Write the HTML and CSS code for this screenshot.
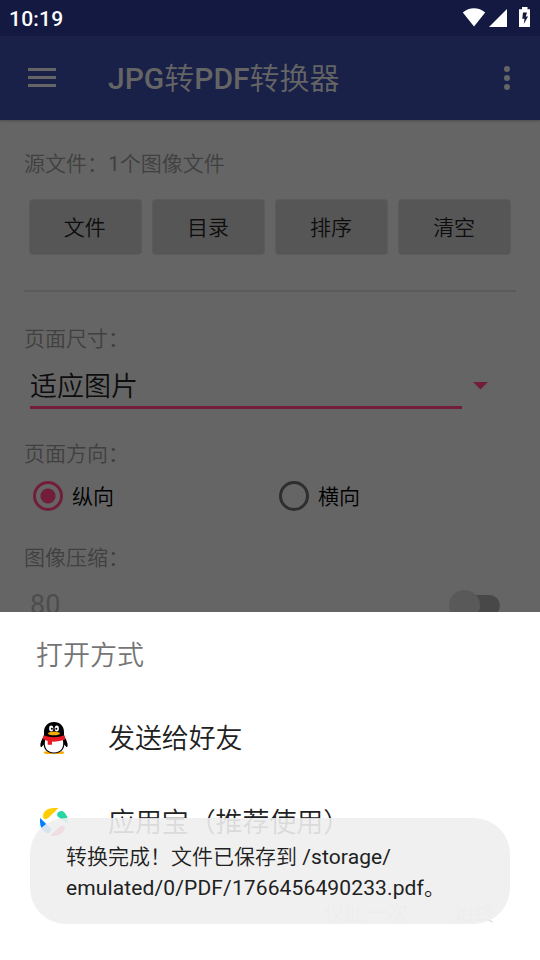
FILE: index.html
```html
<!DOCTYPE html>
<html lang="zh-CN">
<head>
<meta charset="utf-8">
<title>JPG转PDF转换器</title>
<link rel="stylesheet" href="styles.css">
</head>
<body>
<div class="screen">
  <header class="status">
    <span class="clock">10:19</span>
    <svg class="status-icons" width="72" height="24" viewBox="0 0 72 24">
      <path fill="#fff" d="M4.8 6.6C11 .7 21 .7 27.2 6.6L16 20.4Z"/>
      <path fill="#fff" d="M31 21H49V3Z"/>
      <path fill="#fff" d="M61 3.2H64V1H69.5V3.2H72V21H61Z"/>
      <path fill="#141942" d="M65 6.5H69L67.8 10.5H70L65.8 18L66.5 12.8H64.3Z"/>
    </svg>
  </header>
  <nav class="appbar">
    <svg class="menu" width="28" height="19" viewBox="0 0 28 19"><path fill="#656565" d="M0 0H28V3H0ZM0 8H28V11H0ZM0 16H28V19H0Z"/></svg>
    <h1><b>JPG</b>转<b>PDF</b>转换器</h1>
    <svg class="more" width="6" height="24" viewBox="0 0 6 24" fill="#656565"><circle cx="3" cy="3" r="3"/><circle cx="3" cy="12" r="3"/><circle cx="3" cy="21" r="3"/></svg>
  </nav>
  <main class="content">
    <p class="label">源文件：<span class="latin">1</span>个图像文件</p>
    <div class="buttons">
      <button>文件</button><button>目录</button><button>排序</button><button>清空</button>
    </div>
    <hr>
    <p class="label">页面尺寸：</p>
    <div class="select-row">
      <div class="select">适应图片</div>
      <svg width="15" height="8" viewBox="0 0 15 8"><path fill="#721d3a" d="M0 0H15L7.5 7.5Z"/></svg>
    </div>
    <p class="label">页面方向：</p>
    <div class="radios">
      <div class="option"><span class="radio checked"></span><span class="name">纵向</span></div>
      <div class="option"><span class="radio"></span><span class="name">横向</span></div>
    </div>
    <p class="label">图像压缩：</p>
    <div class="quality"><span class="latin">80</span><span class="switch"><span class="thumb"></span></span></div>
  </main>
  <section class="sheet">
    <h2>打开方式</h2>
    <div class="app">
      <svg width="36" height="36" viewBox="0 0 36 36">
        <ellipse cx="13" cy="32.5" rx="5.2" ry="1.5" fill="#faab07"/><ellipse cx="23" cy="32.5" rx="5.2" ry="1.5" fill="#faab07"/>
        <path fill="#000" d="M18 2C11.5 2 8 6.5 8 12V15.5C6 19 4 23 4.4 26C4.7 28 6 27 7.6 24.5C8 30 12 33.4 18 33.4S28 30 28.4 24.5C30 27 31.3 28 31.6 26C32 23 30 19 28 15.5V12C28 6.5 24.5 2 18 2Z"/>
        <path fill="#fff" d="M9.2 20H26.8C28.5 27 25 32.5 18 32.5S7.5 27 9.2 20Z"/>
        <path fill="#eb1923" d="M7.5 15.3Q18 19 28.5 15.3L29.2 19.5Q23 22 16 21.6V24.7H11.7V20.9Q8.8 20.2 6.8 19Z"/>
        <ellipse cx="15.2" cy="8.5" rx="2.1" ry="3" fill="#fff"/><ellipse cx="20.8" cy="8.5" rx="2.1" ry="3" fill="#fff"/>
        <circle cx="15.9" cy="8.7" r="1"/><circle cx="20.3" cy="8.7" r="1"/>
        <ellipse cx="18" cy="13.4" rx="6" ry="1.8" fill="#faab07"/>
      </svg>
      <span class="name">发送给好友</span>
    </div>
    <div class="app">
      <svg width="36" height="36" viewBox="0 0 36 36">
        <path fill="#ffcd00" d="M7.2 13.7C6 8 11 4 18 4H22.4L12.5 13.7C10.8 15.2 8.2 15.5 7.2 13.7Z"/>
        <path fill="#27d5a5" d="M22 8.6C24 6.7 26.7 6.6 28.2 8.2C31 11 32 14 32 18V20L22 12.7C20.8 11.4 20.8 9.8 22 8.6Z"/>
        <path fill="#0080ff" d="M4 14L14 23.5C16.5 26.5 13 31 9.5 28.5C6 26 4 22.5 4 18Z"/>
        <path fill="#ff3c64" d="M14 32L23.5 23C26 20.5 30.5 22 28.5 25.8C26 30 22 32 17 32Z"/>
      </svg>
      <span class="name">应用宝（推荐使用）</span>
    </div>
    <div class="actions"><span>仅此一次</span><span>始终</span></div>
  </section>
  <div class="toast">转换完成！文件已保存到 <span class="latin">/storage/</span><br><span class="latin">emulated/0/PDF/1766456490233.pdf</span>。</div>
</div>
</body>
</html>
```
FILE: styles.css
```css
* { box-sizing: border-box; }
body { margin: 0; }
.screen {
  position: relative;
  width: 540px;
  height: 960px;
  overflow: hidden;
  background: #656565;
  font-family: Roboto, "Noto Sans CJK SC", sans-serif;
  font-weight: 350;
}
h1, h2, p { margin: 0; }
svg { display: block; flex: none; }
.latin { font-weight: 400; }
.status {
  display: flex;
  justify-content: space-between;
  height: 36px;
  padding: 6px 10px 0 9px;
  background: #141942;
}
.clock { padding-top: 1px; color: #fff; font-size: 21px; line-height: 25px; font-weight: 500; letter-spacing: .2px; }
.appbar {
  display: flex;
  align-items: center;
  height: 84px;
  padding: 0 30px 0 28px;
  background: #1a2148;
  box-shadow: 0 1px 2px #4b4b4b;
  clip-path: inset(0 0 -4px);
}
.menu { margin: 0 52px 1px 0; }
.appbar h1 { flex: 1; padding-top: 2px; color: #656565; font-size: 30px; line-height: 40px; font-weight: 350; }
.appbar b { font-weight: 500; }
.content { padding: 27px 24px 0; }
.label { height: 32px; color: #404040; font-size: 21px; line-height: 34px; }
.buttons { display: flex; gap: 10.4px; margin: 20px 5px 0; }
button {
  flex: 1;
  height: 56px;
  padding: 0 1px 2px 0;
  border: 1px solid #5b5b5b;
  border-radius: 4px;
  background: #565656;
  color: #0d0d0d;
  font: inherit;
  font-size: 21px;
}
hr { height: 2px; margin: 35px 0 30px; border: 0; background: #5a5a5a; }
.select-row { display: flex; align-items: center; gap: 11px; margin: 8px 0 28px 6px; }
.select {
  width: 432px;
  height: 47px;
  border-bottom: 3px solid #721d3a;
  color: #0d0d0d;
  font-size: 27px;
  line-height: 50px;
}
.radios { display: grid; grid-template-columns: 246px 246px; margin-top: 12px; }
.option { display: flex; align-items: center; gap: 9px; height: 30px; padding-left: 9px; color: #000; font-size: 21px; }
.option .name { padding-bottom: 3px; }
.radio { width: 30px; height: 30px; border: 3px solid #2e2e2e; border-radius: 50%; }
.checked { border-color: #721d3a; background: radial-gradient(circle, #721d3a 7px, transparent 8px); }
.radios + .label { margin-top: 30px; }
.quality { display: flex; justify-content: space-between; margin-top: 11px; padding: 0 16px 0 6px; color: #4d4d4d; font-size: 27px; line-height: 42px; }
.switch { width: 51px; height: 21px; margin: 11px 0 0; background: linear-gradient(#484848, #484848) right / 42px 21px no-repeat; border-radius: 11px; }
.thumb { display: block; width: 31px; height: 31px; margin-top: -5px; border-radius: 50%; background: #595959; }
.sheet { position: absolute; inset: 612px 0 0; background: #fff; color: #212121; }
.sheet h2 { padding: 23px 36px 0; color: #757575; font-size: 27px; line-height: 42px; font-weight: 350; height: 84px; }
.app { display: flex; align-items: center; gap: 36px; height: 84px; padding-left: 36px; font-size: 27px; letter-spacing: -.1px; }
.app .name { padding-bottom: 3px; }
.actions { display: flex; justify-content: flex-end; gap: 45px; padding: 33px 45px 0; color: #dedede; font-size: 21px; line-height: 32px; }
.toast {
  position: absolute;
  left: 30px;
  top: 818px;
  width: 480px;
  height: 106px;
  padding: 24px 36px 0;
  border-radius: 36px;
  background: rgba(238, 238, 238, .9);
  color: #212121;
  font-size: 21px;
  line-height: 31px;
}
.toast .latin { letter-spacing: .13px; }
```
